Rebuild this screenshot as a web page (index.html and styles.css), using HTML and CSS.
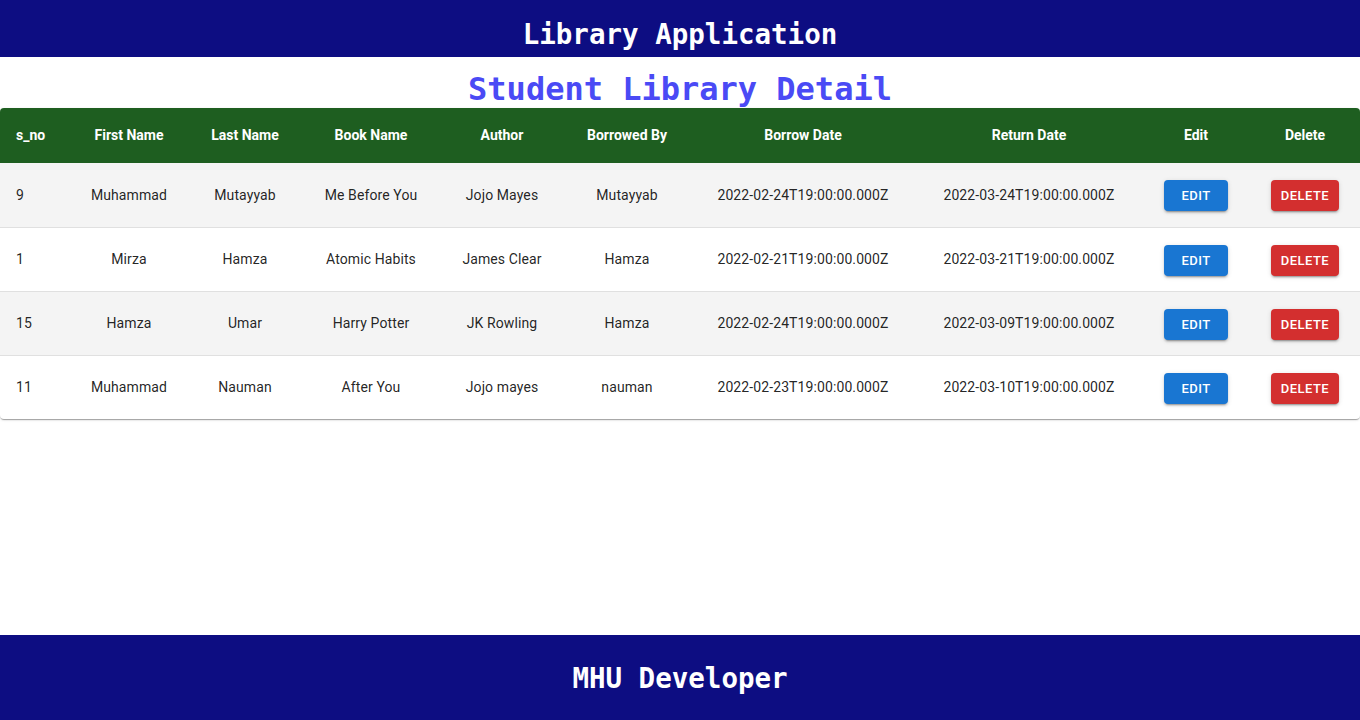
FILE: index.html
```html
<!DOCTYPE html>
<html lang="en">
<head>
<meta charset="utf-8">
<title>Library Application</title>
<link rel="stylesheet" href="styles.css">
</head>
<body>
<div class="app">
  <header class="topbar"><h1 class="app-title">Library Application</h1></header>
  <main class="content">
    <h2 class="page-title">Student Library Detail</h2>
    <div class="paper">
      <table class="table">
        <colgroup>
          <col class="c-sno"><col class="c-first"><col class="c-last"><col class="c-book"><col class="c-author"><col class="c-by"><col class="c-date"><col class="c-date"><col class="c-edit"><col class="c-del">
        </colgroup>
        <thead>
          <tr>
            <th class="left">s_no</th><th>First Name</th><th>Last Name</th><th>Book Name</th><th>Author</th><th>Borrowed By</th><th>Borrow Date</th><th>Return Date</th><th>Edit</th><th>Delete</th>
          </tr>
        </thead>
        <tbody>
          <tr class="odd">
            <td class="left">9</td><td>Muhammad</td><td>Mutayyab</td><td>Me Before You</td><td>Jojo Mayes</td><td>Mutayyab</td><td>2022-02-24T19:00:00.000Z</td><td>2022-03-24T19:00:00.000Z</td>
            <td><button class="btn btn-edit">Edit</button></td><td><button class="btn btn-del">Delete</button></td>
          </tr>
          <tr>
            <td class="left">1</td><td>Mirza</td><td>Hamza</td><td>Atomic Habits</td><td>James Clear</td><td>Hamza</td><td>2022-02-21T19:00:00.000Z</td><td>2022-03-21T19:00:00.000Z</td>
            <td><button class="btn btn-edit">Edit</button></td><td><button class="btn btn-del">Delete</button></td>
          </tr>
          <tr class="odd">
            <td class="left">15</td><td>Hamza</td><td>Umar</td><td>Harry Potter</td><td>JK Rowling</td><td>Hamza</td><td>2022-02-24T19:00:00.000Z</td><td>2022-03-09T19:00:00.000Z</td>
            <td><button class="btn btn-edit">Edit</button></td><td><button class="btn btn-del">Delete</button></td>
          </tr>
          <tr class="last">
            <td class="left">11</td><td>Muhammad</td><td>Nauman</td><td>After You</td><td>Jojo mayes</td><td>nauman</td><td>2022-02-23T19:00:00.000Z</td><td>2022-03-10T19:00:00.000Z</td>
            <td><button class="btn btn-edit">Edit</button></td><td><button class="btn btn-del">Delete</button></td>
          </tr>
        </tbody>
      </table>
    </div>
  </main>
  <footer class="footer"><h2 class="footer-title">MHU Developer</h2></footer>
</div>
</body>
</html>
```
FILE: styles.css
```css
* { box-sizing: border-box; }
html, body { margin: 0; padding: 0; }
body {
  font-family: Roboto, "Liberation Sans", sans-serif;
  background: #fff;
}
.app {
  min-height: 100vh;
  display: flex;
  flex-direction: column;
}
.topbar {
  background: #0d0d82;
  height: 57px;
  display: flex;
  align-items: center;
  justify-content: center;
}
.app-title, .footer-title {
  margin: 0;
  font-family: "DejaVu Sans Mono", monospace;
  font-weight: 700;
  font-size: 27.5px;
  color: #fff;
  line-height: 1.2;
}
.app-title { margin-top: 12px; }
.content { flex: 0 0 auto; }
.page-title {
  margin: 0;
  padding: 14px 0 0;
  text-align: center;
  font-family: "DejaVu Sans Mono", monospace;
  font-weight: 700;
  font-size: 32px;
  line-height: 37px;
  color: #4a4af5;
}
.paper {
  background: #fff;
  border-radius: 4px;
  overflow: hidden;
  box-shadow: 0 2px 1px -1px rgba(0,0,0,0.2), 0 1px 1px 0 rgba(0,0,0,0.14), 0 1px 3px 0 rgba(0,0,0,0.12);
}
.table {
  width: 100%;
  border-collapse: collapse;
  table-layout: fixed;
}
.c-sno { width: 70px; }
.c-first { width: 118px; }
.c-last { width: 114px; }
.c-book { width: 138px; }
.c-author { width: 124px; }
.c-by { width: 126px; }
.c-date { width: 226px; }
.c-edit { width: 108px; }
.c-del { width: 110px; }
th, td {
  padding: 16px;
  text-align: center;
  font-size: 14px;
  border-bottom: 1px solid #e0e0e0;
  white-space: nowrap;
}
th {
  background: #1e5e20;
  color: #fff;
  font-weight: 700;
  line-height: 23px;
  border-bottom: none;
}
td {
  color: rgba(0,0,0,0.87);
  line-height: 20px;
  height: 64px;
  font-weight: 400;
  letter-spacing: 0.1px;
}
.left { text-align: left; }
tr.odd td { background: #f4f4f4; }
tr.last td { border-bottom: none; }
.btn {
  font-family: Roboto, "Liberation Sans", sans-serif;
  font-size: 13px;
  font-weight: 500;
  text-transform: uppercase;
  letter-spacing: 0.46px;
  line-height: 23px;
  min-width: 64px;
  padding: 4px 10px;
  border: none;
  border-radius: 4px;
  color: #fff;
  cursor: pointer;
  box-shadow: 0 3px 1px -2px rgba(0,0,0,0.2), 0 2px 2px 0 rgba(0,0,0,0.14), 0 1px 5px 0 rgba(0,0,0,0.12);
  vertical-align: middle;
  position: relative;
  top: 1px;
}
.btn-edit { background: #1976d2; }
.btn-del { background: #d32f2f; }
.footer {
  margin-top: auto;
  background: #0d0d82;
  height: 85px;
  display: flex;
  align-items: center;
  justify-content: center;
}
.footer-title { margin-top: 2px; }
```
